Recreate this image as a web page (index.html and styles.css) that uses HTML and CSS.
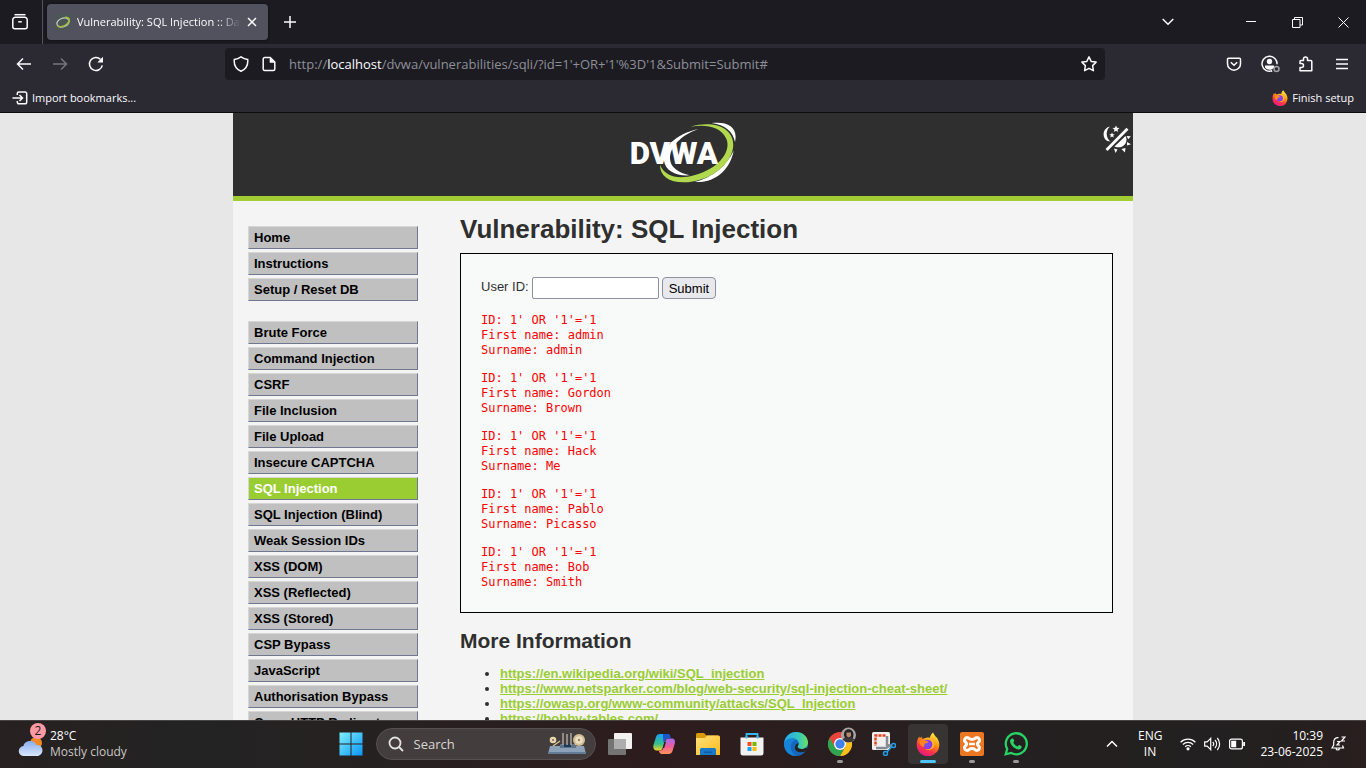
FILE: index.html
```html
<!DOCTYPE html>
<html lang="en">
<head>
<meta charset="utf-8">
<title>Vulnerability: SQL Injection</title>
<link rel="stylesheet" href="styles.css">
</head>
<body>
<svg class="defs" aria-hidden="true">
  <defs>
    <linearGradient id="fx-body" x1="0.8" y1="0" x2="0.3" y2="1"><stop offset="0" stop-color="#fff44f"/><stop offset="0.4" stop-color="#ff980e"/><stop offset="0.7" stop-color="#ff3647"/><stop offset="1" stop-color="#e31587"/></linearGradient>
    <radialGradient id="fx-core"><stop offset="0" stop-color="#6b57ff"/><stop offset="1" stop-color="#9a2ee0"/></radialGradient>
    <linearGradient id="win" x1="0" y1="0" x2="1" y2="1"><stop offset="0" stop-color="#7ff0ff"/><stop offset="1" stop-color="#0a94f5"/></linearGradient>
    <linearGradient id="cloud" x1="0" y1="0" x2="0" y2="1"><stop offset="0" stop-color="#86aef0"/><stop offset="1" stop-color="#dbe7fb"/></linearGradient>
    <linearGradient id="edge-a" x1="0" y1="0" x2="1" y2="0"><stop offset="0" stop-color="#29a9e8"/><stop offset="0.6" stop-color="#35c6c1"/><stop offset="1" stop-color="#6be05c"/></linearGradient>
    <linearGradient id="folder" x1="0" y1="0" x2="1" y2="1"><stop offset="0" stop-color="#ffe17c"/><stop offset="1" stop-color="#f8ba1c"/></linearGradient>
    <linearGradient id="cop-a" x1="0" y1="0" x2="0" y2="1"><stop offset="0" stop-color="#1aa0f5"/><stop offset="0.6" stop-color="#35c08b"/><stop offset="1" stop-color="#f4d52a"/></linearGradient>
    <linearGradient id="cop-b" x1="0" y1="0" x2="0" y2="1"><stop offset="0" stop-color="#a36bf5"/><stop offset="0.5" stop-color="#ee5c9c"/><stop offset="1" stop-color="#ff9655"/></linearGradient>
    <symbol id="firefox" viewBox="0 0 24 24">
      <path fill="url(#fx-body)" d="M17 .5c1 2 2 3 3 4.500 1 .5 1.600 1.500 1.900 2.500.9 1.600 1.400 3.400 1.400 5.300A11.300 11.300 0 0 1 .7 13C.6 9.500 1.700 6.500 3.300 4.500l.5 2 1.500-2 .8 2.200c1.300-.3 2.400-.2 3.500.2 1.400-.6 2.600-.6 4-.1.5-2.500 1.500-4.700 3.400-6.300Z"/>
      <path fill="#ffb52b" d="M8 7c2-2 6-2 8 0 2.200 2 3 5 2 7.500C16.500 18 12 19 9 17c4 0 6-1.500 6-4 0-3-2-5-7-6Z"/>
      <circle cx="11.500" cy="12.500" r="4.800" fill="url(#fx-core)"/>
      <path fill="#ff8a1c" d="M3.500 10c2-1.500 4-2 6-1.500l3 1.200c-.5 1.300-2 1.600-3.300 1.800-1 1-1.200 2.200-.7 3.200C5.500 15 4 13 3.500 10Z"/>
    </symbol>
  </defs>
</svg>

<header class="browser">
  <div class="tabs">
    <button class="view-btn" aria-label="Recent browsing"><svg width="18" height="18" viewBox="0 0 18 18" class="line"><path d="M3.500 1.700h11"/><path d="M4.300 4.300h9.400a2.500 2.500 0 0 1 2.500 2.500v6.900a2 2 0 0 1-2 2H3.800a2 2 0 0 1-2-2V6.800a2.500 2.500 0 0 1 2.500-2.500Z"/><path d="M7.200 8.800h3.600"/></svg></button>
    <div class="tab">
      <svg width="16" height="16" viewBox="0 0 16 16"><rect width="16" height="16" fill="#4d5656"/><ellipse cx="8" cy="8.500" rx="6.300" ry="4.300" fill="none" stroke="#c9cfc4" stroke-width="1.200" transform="rotate(-20 8 8.500)"/><path d="M10 3.300c5-.3 5.500 4 2 6.700-3 2.500-7 3.500-9 2" fill="none" stroke="#a2b944" stroke-width="1.600"/></svg>
      <span class="tab-title">Vulnerability: SQL Injection :: Da</span>
      <button aria-label="Close tab"><svg width="10" height="10" viewBox="0 0 10 10" class="line"><path d="m1 1 8 8M9 1 1 9"/></svg></button>
    </div>
    <button class="new-tab" aria-label="New tab"><svg width="12" height="12" viewBox="0 0 12 12" class="line"><path d="M6 0v12M0 6h12"/></svg></button>
    <div class="window-controls">
      <button class="all-tabs" aria-label="List all tabs"><svg width="12" height="8" viewBox="0 0 12 8" class="line"><path d="m.7 1 5.300 5.300L11.300 1"/></svg></button>
      <button aria-label="Minimize"><svg width="10" height="10" viewBox="0 0 10 10" class="thin"><path d="M0 4.500h10"/></svg></button>
      <button aria-label="Restore"><svg width="11" height="11" viewBox="0 0 11 11" class="thin"><path d="M.5 2.500h7.500v8H.5zM2.500 2.500v-2h8v7.500H8"/></svg></button>
      <button aria-label="Close"><svg width="11" height="11" viewBox="0 0 11 11" class="thin"><path d="m.5.5 10 10M10.500.5l-10 10"/></svg></button>
    </div>
  </div>

  <div class="toolbar">
    <nav class="nav-left" aria-label="Navigation">
      <button aria-label="Back"><svg width="16" height="16" viewBox="0 0 16 16" class="line"><path d="M15 8H1.500M7 2.500 1.500 8 7 13.500"/></svg></button>
      <button aria-label="Forward" disabled><svg width="16" height="16" viewBox="0 0 16 16" class="line"><path d="M1 8h13.500M9 2.500 14.500 8 9 13.500"/></svg></button>
      <button aria-label="Reload"><svg width="16" height="16" viewBox="0 0 16 16" class="line"><path d="M14.300 9.300A6.500 6.500 0 1 1 12.600 3.400"/><path fill="currentColor" stroke="none" d="M15 .8v5.700H9.300Z"/></svg></button>
    </nav>
    <div class="url-bar">
      <svg width="16" height="16" viewBox="0 0 16 16" class="line"><path d="M8 .8c2.200 1.500 4.300 2.300 6.700 2.700.5 4.800-1.200 9.300-6.700 11.800C2.500 12.800.8 8.300 1.300 3.500 3.700 3.100 5.800 2.300 8 .8Z"/></svg>
      <svg width="16" height="16" viewBox="0 0 16 16" class="line"><path d="M3.700 1.500h5.500l4.600 4.600v6.900a1.500 1.500 0 0 1-1.500 1.500H3.700A1.500 1.500 0 0 1 2.200 13V3a1.500 1.500 0 0 1 1.500-1.500Z"/><path fill="currentColor" stroke="none" d="M8.700 1.500v5.200h5.100Z"/></svg>
      <span class="url">http://<b>localhost</b>/dvwa/vulnerabilities/sqli/?id=1'+OR+'1'%3D'1&amp;Submit=Submit#</span>
      <button aria-label="Bookmark this page"><svg width="16" height="16" viewBox="0 0 16 16" class="line"><path stroke-linejoin="round" d="m8 .9 2.200 4.500 4.900.7-3.500 3.500.8 5.100L8 12.300l-4.400 2.400.8-5.100L.9 6.100l4.900-.7Z"/></svg></button>
    </div>
    <div class="nav-right">
      <button aria-label="Save to Pocket"><svg width="16" height="16" viewBox="0 0 16 16" class="line"><path d="M2.500 2.200h11a1 1 0 0 1 1 1v4.500a6.500 6.500 0 0 1-13 0V3.200a1 1 0 0 1 1-1Z"/><path d="M4.800 6.300 8 9.300l3.200-3"/></svg></button>
      <button aria-label="Account"><svg width="20" height="18" viewBox="0 0 20 18" class="line"><path d="M12.200 15.700a7.500 7.500 0 1 1 4.800-6.400"/><circle cx="9.500" cy="6.500" r="2.700" fill="currentColor" stroke="none"/><path fill="currentColor" stroke="none" d="M5 10.500h9v2a5.500 5.500 0 0 1-9 0Z"/><circle cx="16.500" cy="14" r="2.500" stroke="#a3a2a8"/></svg></button>
      <button aria-label="Extensions"><svg width="16" height="16" viewBox="0 0 16 16" class="line"><path stroke-linejoin="round" d="M5.500 4.500V3a2 2 0 0 1 4 0v1.500h3.300a1 1 0 0 1 1 1v9.200H2v-3.200h1.500a2 2 0 0 0 0-4H2v-2a1 1 0 0 1 1-1Z"/></svg></button>
      <button aria-label="Menu"><svg width="12" height="12" viewBox="0 0 12 12" class="line"><path d="M0 1.500h12M0 6h12M0 10.500h12"/></svg></button>
    </div>
  </div>

  <div class="bookmarks">
    <button><svg width="16" height="14" viewBox="0 0 16 14" class="line"><path d="M5.300 4V2.500a1.500 1.500 0 0 1 1.500-1.500h6.400a1.500 1.500 0 0 1 1.500 1.500v8.800a1.500 1.500 0 0 1-1.500 1.500H6.800a1.500 1.500 0 0 1-1.500-1.500V10M.5 7h9.500M7.500 4l3 3-3 3"/></svg>Import bookmarks...</button>
    <button><svg width="16" height="16"><use href="#firefox"/></svg>Finish setup</button>
  </div>
</header>

<div class="viewport">
  <div class="site">
    <div class="site-header">
      <svg class="logo" width="108" height="64" viewBox="90 34 324 192" role="img" aria-label="DVWA">
        <path fill="#fff" d="M298 58C232 72 190 112 195 153c4 30 36 47 78 44-34-7-60-24-60-51 0-35 34-70 85-88Z"/>
        <path fill="#fff" d="M338 40c48-6 80 12 70 57-6-32-30-51-70-57ZM404 123c-10 54-53 98-117 94 55-15 94-47 117-94Z"/>
        <path fill="#b0d94e" d="M275 51c72-21 135 5 127 64-7 51-73 103-148 103-45 0-71-20-71-53 14 35 54 46 105 31 35-10 60-25 75-42C382 134 392 108 381 86 366 54 326 43 275 51Z"/>
        <text x="92" y="163" class="logo-text">DVWA</text>
      </svg>
      <button class="theme" aria-label="Toggle theme"><svg width="28" height="28" viewBox="0 0 28 28"><path fill="#fff" d="M7 1.500C-.5 3-1.500 13 4.500 16l3 .5C2.500 13 2.500 5 7 1.500ZM13 .5l1 2.300 2.500.2-2 1.700.7 2.300-2.200-1.200-2.200 1.200.7-2.300-2-1.700 2.500-.2ZM9 7.500l.8 1.700 1.900.1-1.500 1.300.5 1.900L9 11.500l-1.700 1 .5-1.900-1.500-1.300 1.900-.1ZM11.500 21.500 22.500 11c3.500 6-2.500 14-11 10.500ZM23.500 11l4.300.3-2.500 3ZM24 17l4 2.200-4 1.300ZM18.500 24l4-1-.6 4.500ZM11 23.500l3.500 1-2 3.500Z"/><path d="M3.500 25 24.500 3.800" stroke="#fff" stroke-width="2.800"/></svg></button>
    </div>
    <div class="site-body">
      <nav class="menu" aria-label="Main menu">
        <ul>
          <li><a href="#">Home</a></li>
          <li><a href="#">Instructions</a></li>
          <li><a href="#">Setup / Reset DB</a></li>
        </ul>
        <ul>
          <li><a href="#">Brute Force</a></li>
          <li><a href="#">Command Injection</a></li>
          <li><a href="#">CSRF</a></li>
          <li><a href="#">File Inclusion</a></li>
          <li><a href="#">File Upload</a></li>
          <li><a href="#">Insecure CAPTCHA</a></li>
          <li><a href="#" class="selected">SQL Injection</a></li>
          <li><a href="#">SQL Injection (Blind)</a></li>
          <li><a href="#">Weak Session IDs</a></li>
          <li><a href="#">XSS (DOM)</a></li>
          <li><a href="#">XSS (Reflected)</a></li>
          <li><a href="#">XSS (Stored)</a></li>
          <li><a href="#">CSP Bypass</a></li>
          <li><a href="#">JavaScript</a></li>
          <li><a href="#">Authorisation Bypass</a></li>
          <li><a href="#">Open HTTP Redirect</a></li>
        </ul>
      </nav>
      <main class="main">
        <h1>Vulnerability: SQL Injection</h1>
        <section class="panel">
          <form>
            <label for="uid">User ID:</label>
            <input type="text" id="uid" name="id">
            <button type="submit">Submit</button>
          </form>
<pre>ID: 1' OR '1'='1
First name: admin
Surname: admin</pre>
<pre>ID: 1' OR '1'='1
First name: Gordon
Surname: Brown</pre>
<pre>ID: 1' OR '1'='1
First name: Hack
Surname: Me</pre>
<pre>ID: 1' OR '1'='1
First name: Pablo
Surname: Picasso</pre>
<pre>ID: 1' OR '1'='1
First name: Bob
Surname: Smith</pre>
        </section>
        <h2>More Information</h2>
        <ul class="links">
          <li><a href="#">https://en.wikipedia.org/wiki/SQL_injection</a></li>
          <li><a href="#">https://www.netsparker.com/blog/web-security/sql-injection-cheat-sheet/</a></li>
          <li><a href="#">https://owasp.org/www-community/attacks/SQL_Injection</a></li>
          <li><a href="#">https://bobby-tables.com/</a></li>
        </ul>
      </main>
    </div>
  </div>
</div>

<footer class="taskbar">
  <div class="weather">
    <div class="weather-icon">
      <svg width="26" height="24" viewBox="0 0 26 24"><circle cx="18" cy="10" r="6" fill="#f08a24"/><path fill="url(#cloud)" d="M6 23a5 5 0 0 1-.5-10C6 9.500 9 8 12 8s5.500 1.500 6.300 4c3.500-.3 6.200 2 6.200 5.200S22 23 19 23Z"/></svg>
      <span class="badge">2</span>
    </div>
    <div><div>28°C</div><div class="dim">Mostly cloudy</div></div>
  </div>
  <div class="apps">
    <button class="app" aria-label="Start"><svg width="24" height="24" viewBox="0 0 24 24"><path fill="url(#win)" d="M.5.5h11v11H.5zM12.500.5h11v11h-11zM.5 12.500h11v11H.5zM12.500 12.500h11v11h-11z"/></svg></button>
    <button class="search"><svg width="16" height="16" viewBox="0 0 16 16" fill="none" stroke="#e4e2e2" stroke-width="1.800"><circle cx="7" cy="7" r="5.500"/><path d="m11 11 4 4"/></svg><span>Search</span>
      <svg width="40" height="24" viewBox="0 0 40 24"><path fill="#8da1b8" d="M3 14h34l2 8H1z"/><path fill="#637b96" d="M1 20h38v2H1z"/><path fill="#5f7388" d="M13 12h16v4H13z"/><path fill="#1d3b55" d="M17 12h7v3h-7z"/><path stroke="#aaa59e" stroke-width="1.500" d="M16 1v12M20 2v11M24 1v12"/><path stroke="#d5bc8b" stroke-width="1.500" d="M6 14 13 9"/><circle cx="6" cy="8" r="3.300" fill="#e7d5ad"/><circle cx="32" cy="8" r="6" fill="#d3bd93"/><circle cx="32" cy="8" r="3.800" fill="#ece0c4"/><circle cx="32" cy="8" r="1.200" fill="#9a8465"/><circle cx="6" cy="8" r="1" fill="#80694d"/></svg>
    </button>
    <button class="app" aria-label="Task view"><svg width="24" height="24" viewBox="0 0 24 24"><rect x="6" y="1" width="18" height="16" rx="1" fill="#f1f1f1"/><rect x="0" y="7" width="18" height="16" rx="1" fill="#747474"/><path d="M6 7h12v10H6z" fill="#adadad"/></svg></button>
    <button class="app" aria-label="Copilot"><svg width="24" height="24" viewBox="0 0 24 24"><path fill="url(#cop-a)" d="M8 2h7.500c2 0 2.500 1.500 3 4H16c-2 0-2.700 1-3.200 3l-2 6.500c-.6 2-1.600 3-3.300 3H5C2 18.500.8 16 1.500 13L4 5c.6-2 2-3 4-3Z"/><path fill="#1857cc" d="M11 2h4.500c2 0 2.500 1.500 3 4H16c-2 0-2.700 1-3.200 3L12 11c-1-2-1-6-1-9Z"/><path fill="url(#cop-b)" d="M18.500 6.500H20c2.500 0 3.500 2.500 2.800 5L20.500 19c-.7 2-2 3-4 3H10c-2 0-2.700-1.500-3.200-3.500h1.500c2 0 2.700-1 3.200-3l2-6.500c.6-2 1.600-2.500 3.300-2.500Z"/><path fill="#292122" d="m12.500 10-1.800 6h1.500L14 10Z"/></svg></button>
    <button class="app" aria-label="File Explorer"><svg width="24" height="24" viewBox="0 0 24 24"><path fill="#d99a0c" d="M0 2.500A1.500 1.500 0 0 1 1.500 1H8l2.500 2.500H22V9H0z"/><path fill="url(#folder)" d="M0 6h9l2-2.500h11.500A1.500 1.500 0 0 1 24 5v18H0z"/><path fill="#1879c9" d="M4 23v-5.500A1.500 1.500 0 0 1 5.500 16h13a1.500 1.500 0 0 1 1.500 1.500V23z"/><path fill="#0d5eaa" d="M8 19.500h8V21H8z"/></svg></button>
    <button class="app" aria-label="Microsoft Store"><svg width="24" height="24" viewBox="0 0 24 24"><path fill="none" stroke="#35b7f1" stroke-width="1.800" d="M6.500 7V2h11v5"/><path fill="#f2f2f2" d="M.5 5.500h23V21a2.500 2.500 0 0 1-2.500 2.500H3A2.500 2.500 0 0 1 .5 21z"/><path fill="#f04e23" d="M7.500 10h4v4h-4z"/><path fill="#7cb500" d="M12.500 10h4v4h-4z"/><path fill="#1aa4ed" d="M7.500 15h4v4h-4z"/><path fill="#fdb80a" d="M12.500 15h4v4h-4z"/><path stroke="#35b7f1" stroke-width="1.800" d="M6.500 4v2.500M17.500 4v2.500"/></svg></button>
    <button class="app" aria-label="Edge"><svg width="24" height="24" viewBox="0 0 24 24"><circle cx="12" cy="12" r="12" fill="#1568bd"/><path fill="url(#edge-a)" d="M0 11C1 4.500 6 0 12 0c7 0 12 5 12 10.500 0 4-3 6.500-6.500 6.500-2.500 0-4-1-4-2.200 0-1 1.200-1.500 1.200-3.500 0-2.500-2.500-4.800-6-4.800C5 6.500 1.500 8.500 0 11Z"/><path fill="#1684d8" d="M0 12c.5-3.500 4-5.500 8.500-5.500 1.500 0 3 .5 4 1.300C8 9 6 12.500 7 17c.7 3 2.500 5.500 5 7C5 24 0 18.500 0 12Z"/><path fill="#26201f" d="M13.500 14.800c0 1.200 1.500 2.200 4 2.200 1.800 0 3.200-.5 4.300-1.300L24 17c-1.500 2-4 3.300-7 3.300-4.500 0-7-3-5.800-6.300.6-1.500 1.800-2.500 3.300-3 .3 1.700-1 2.800-1 3.800Z"/></svg></button>
    <button class="app running" aria-label="Chrome"><svg width="32" height="34" viewBox="0 0 32 34"><circle cx="16" cy="17" r="12" fill="#e9453a"/><path fill="#fbc116" d="M16 11h10.400A12 12 0 0 1 16 29l5.200-9Z"/><path fill="#2ca74f" d="M5.600 11A12 12 0 0 0 16 29l5.200-9a6 6 0 0 1-10.400 0Z"/><circle cx="16" cy="17" r="6" fill="#fff"/><circle cx="16" cy="17" r="4.700" fill="#3f82ee"/><circle cx="24.500" cy="8" r="7.500" fill="#aaa5a2"/><path fill="#262224" d="M20 8.500c-1-8 9-8.500 9.500-1L29 11h-8Z"/><path fill="#b4876e" d="M22.500 5.500h4.500V9l-2.300 1.800L22.500 9z"/><path fill="#3a3639" d="M18.500 12.500c2-2 4-2.500 6-2 2-.5 4 0 5.800 2a7.500 7.500 0 0 1-11.800 0Z"/></svg></button>
    <button class="app" aria-label="Snipping Tool"><svg width="24" height="24" viewBox="0 0 24 24"><rect width="18" height="18" rx="1.500" fill="#f0f0f0"/><path fill="none" stroke="#df421f" stroke-width="2.500" stroke-dasharray="3 1" d="M13.500 3.500h-10V14"/><path fill="none" stroke="#858b92" stroke-width="2.500" d="M15 4v9l5 1M4 16h10l3-2"/><circle cx="21.500" cy="13.500" r="2" fill="none" stroke="#21a0e5" stroke-width="1.500"/><circle cx="13.500" cy="21.500" r="2" fill="none" stroke="#21a0e5" stroke-width="1.500"/><path stroke="#21a0e5" stroke-width="1.500" d="m15 20 4.500-5"/></svg></button>
    <button class="app running active" aria-label="Firefox"><svg width="24" height="24"><use href="#firefox"/></svg></button>
    <button class="app running" aria-label="XAMPP"><svg width="24" height="24" viewBox="0 0 24 24"><rect width="24" height="24" rx="2" fill="#ed7622"/><path fill="none" stroke="#fff" stroke-width="3" stroke-linejoin="round" d="M7 5.500c2 0 2 2 5 2s3-2 5-2 3.500 3 1.500 4.700c-1.500 1.300-1.500 2.300 0 3.600C20.500 15.500 19 18.500 17 18.500s-2-2-5-2-3 2-5 2-3.500-3-1.500-4.700c1.500-1.300 1.500-2.300 0-3.600C3.500 8.500 5 5.500 7 5.500Z"/><path stroke="#fff" stroke-width="2.500" d="M9 12h6"/></svg></button>
    <button class="app running" aria-label="WhatsApp"><svg width="24" height="24" viewBox="0 0 24 24"><path fill="none" stroke="#28d366" stroke-width="2.300" d="M1.700 22.300 3.200 17A10.500 10.500 0 1 1 7.300 21Z"/><path fill="#28d366" d="m8 6.500 1.200.1c.5.7.9 1.700 1.100 2.500-.3.700-.8 1-1 1.500 1 1.900 2.300 3.100 4.200 4l1.500-1.500c1 .3 1.800.7 2.700 1.300.2 1.800-1.500 3.200-3.300 3C10 16.600 7 13.500 6 9.500 5.900 8.300 6.700 7 8 6.500Z"/></svg></button>
  </div>
  <div class="tray">
    <button aria-label="Show hidden icons"><svg width="12" height="8" viewBox="0 0 12 8" class="line"><path d="m1 6.500 5-5 5 5"/></svg></button>
    <div class="lang">ENG<br>IN</div>
    <div class="status">
      <svg width="16" height="14" viewBox="0 0 16 14" class="wire"><path d="M.6 5.200a10.500 10.500 0 0 1 14.800 0M2.900 7.500a7.200 7.200 0 0 1 10.200 0M5.200 9.800a4 4 0 0 1 5.600 0"/><circle cx="8" cy="11.800" r="1.600" fill="#fff" stroke="none"/></svg>
      <svg width="17" height="14" viewBox="0 0 17 14" class="wire"><path d="M.7 4.800h2.500l3.500-3.500v11.400L3.200 9.200H.7zM8.800 5a3 3 0 0 1 0 4M11 3a6 6 0 0 1 0 8M13.300 1a9 9 0 0 1 0 12"/></svg>
      <svg width="16" height="12" viewBox="0 0 16 12" class="wire"><rect x=".6" y="1.100" width="12.800" height="9.800" rx="2"/><path fill="#fff" stroke="none" d="M2.200 2.800h5v6.400h-5zM14.200 4H16v4h-1.800z"/></svg>
    </div>
    <div class="clock">10:39<br>23-06-2025</div>
    <svg width="15" height="16" viewBox="0 0 15 16" class="wire"><path d="M7.500 1.600C4.500 1.200 2.700 3.500 2.700 6v3L1 12h11.500l-1-2.500M5 12.500c.5 2 3 2 3.500 0M6 5.500h3L6 9h3M10.500 1H14l-3.500 4H14"/></svg>
  </div>
</footer>
</body>
</html>
```
FILE: styles.css
```css
* { box-sizing: border-box; }
body {
  margin: 0;
  height: 100vh;
  display: flex;
  flex-direction: column;
  overflow: hidden;
  font: 12px/16px "Open Sans", "Noto Sans", sans-serif;
}
button {
  border: 0;
  padding: 0;
  background: none;
  color: inherit;
  font: inherit;
}
svg { display: block; flex: none; }
ul { margin: 0; padding: 0; list-style: none; }
.defs { position: absolute; width: 0; height: 0; }
.line { fill: none; stroke: currentColor; stroke-width: 1.5; }
.thin { fill: none; stroke: currentColor; stroke-width: 1; }
.wire { fill: none; stroke: #fff; stroke-width: 1.2; }

/* browser window */
.browser {
  flex: none;
  background: #2b2a33;
  color: #fbfbfe;
  border-bottom: 1px solid #0c0c0d;
  font-size: 11px;
}
.tabs {
  display: flex;
  align-items: center;
  height: 44px;
  background: #1c1b22;
}
.view-btn {
  width: 43px;
  height: 44px;
  padding-left: 11px;
  border-right: 1px solid #54535b;
}
.tab {
  display: flex;
  align-items: center;
  gap: 6px;
  width: 221px;
  height: 36px;
  margin-left: 4px;
  padding: 0 11px 0 8px;
  border-radius: 4px;
  background: #52525e;
  box-shadow: 0 0 3px #0c0c0d;
}
.tab-title {
  flex: 1;
  overflow: hidden;
  white-space: nowrap;
  -webkit-mask-image: linear-gradient(to left, transparent, #000 24px);
  mask-image: linear-gradient(to left, transparent, #000 24px);
}
.new-tab { margin-left: 16px; }
.window-controls { display: flex; margin-left: auto; }
.window-controls button {
  display: grid;
  place-items: center;
  width: 46px;
  height: 44px;
}
.window-controls .all-tabs { margin-right: 37px; }
.toolbar {
  display: grid;
  grid-template-columns: 225px 1fr 261px;
  align-items: center;
  height: 40px;
}
.nav-left, .nav-right { display: flex; }
.nav-left { padding-left: 6px; }
.nav-right { justify-content: flex-end; padding-right: 6px; }
.nav-left button, .nav-right button {
  display: grid;
  place-items: center;
  width: 36px;
  height: 32px;
}
.nav-left button:disabled { color: #76757c; }
.url-bar {
  display: flex;
  align-items: center;
  gap: 12px;
  height: 32px;
  padding: 0 8px;
  border-radius: 4px;
  background: #1c1b22;
}
.url {
  flex: 1;
  font-size: 13px;
  color: #8f8f98;
  white-space: nowrap;
}
.url b { font-weight: 400; color: #fbfbfe; }
.bookmarks {
  display: flex;
  justify-content: space-between;
  height: 28px;
  padding: 0 12px;
}
.bookmarks button { display: flex; align-items: center; gap: 4px; }

/* page */
.viewport {
  flex: 1;
  min-height: 0;
  overflow: hidden;
  background: #e7e7e7;
  color: #2f2f2f;
  font: 13px/15px "Liberation Sans", Arial, sans-serif;
}
.site { max-width: 900px; min-height: 100%; margin: 0 auto; background: #f4f4f4; }
.site-header {
  display: grid;
  grid-template-columns: 1fr auto 1fr;
  align-items: start;
  height: 88px;
  padding-top: 8px;
  background: #2f2f2f;
  border-bottom: 5px solid #a1cc33;
}
.logo { grid-column: 2; }
.logo-text { font: 900 94px Roboto, sans-serif; fill: #fff; }
.theme { justify-self: end; margin: 4px 2px 0 0; }
.site-body { display: flex; gap: 42px; padding: 0 20px 0 15px; }
.menu {
  flex: none;
  display: grid;
  align-content: start;
  gap: 20px;
  width: 170px;
  padding-top: 25px;
}
.menu ul { display: grid; gap: 3px; }
.menu a {
  display: block;
  height: 23px;
  padding: 3px 5px;
  border: 1px solid;
  border-color: #d6d6d6 #6f7890 #6f7890 #d6d6d6;
  background: #c0c0c0;
  color: #000;
  font-weight: bold;
  text-decoration: none;
}
.menu .selected { background: #9acd32; color: #fff; }
.main { flex: 1; }
h1 { margin: 14px 0 10px; font-size: 26px; line-height: 28px; }
h2 { margin: 16px 0 13px; font-size: 21px; line-height: 24px; }
.panel {
  padding: 23px 20px 22px;
  border: 1px solid #000;
  background: #f8fafa;
}
.panel form { display: flex; align-items: center; gap: 3px; margin-bottom: 14px; }
.panel label { line-height: 16px; padding-bottom: 2px; }
.panel input {
  width: 127px;
  height: 22px;
  border: 1px solid #8f8f9d;
  border-radius: 2px;
  background: #fff;
}
.panel form button {
  height: 22px;
  padding: 0 6px;
  border: 1px solid #8f8f9d;
  border-radius: 4px;
  background: #e9e9ed;
  color: #000;
}
pre {
  margin: 0 0 13px;
  color: #f00;
  font: 12px/15px "DejaVu Sans Mono", monospace;
}
pre:last-child { margin-bottom: 0; }
.links { padding-left: 40px; list-style: disc; }
.links a { color: #9acd32; font-weight: bold; }

/* taskbar */
.taskbar {
  flex: none;
  display: grid;
  grid-template-columns: 1fr auto 1fr;
  align-items: center;
  height: 48px;
  padding-bottom: 2px;
  border-top: 1px solid #474342;
  background: linear-gradient(90deg, #272120, #232323 14%, #272121 30%, #2d1c1d 47%, #2c1d1e 55%, #252021 70%, #222020 90%, #281f1e);
  color: #fff;
}
.weather { display: flex; align-items: center; gap: 6px; padding-left: 18px; }
.weather-icon { position: relative; padding-top: 2px; }
.badge {
  position: absolute;
  top: -8px;
  left: 12px;
  width: 16px;
  height: 16px;
  border-radius: 8px;
  background: #ff99a4;
  color: #1a1a1a;
  text-align: center;
}
.dim { color: #c9c6c5; }
.apps { display: flex; align-items: center; }
.app {
  position: relative;
  display: grid;
  place-items: center;
  width: 44px;
  height: 44px;
}
.app.active { width: 40px; margin: 0 2px; height: 40px; border-radius: 4px; background: #383434; }
.running::after {
  content: "";
  position: absolute;
  bottom: 3px;
  left: 50%;
  width: 6px;
  height: 3px;
  margin-left: -3px;
  border-radius: 2px;
  background: #9b9898;
}
.active::after { bottom: 1px; width: 16px; margin-left: -8px; background: #4cc2ff; }
.search {
  display: flex;
  align-items: center;
  gap: 10px;
  width: 220px;
  height: 32px;
  margin: 0 2px 0 3px;
  padding: 0 8px 0 11px;
  border: 1px solid #565050;
  border-radius: 16px;
  background: #433d3d;
  color: #d9d6d6;
}
.search span { flex: 1; text-align: left; font-size: 13px; }
.tray {
  display: flex;
  align-items: center;
  justify-content: flex-end;
  padding-right: 20px;
}
.lang { width: 24px; margin-left: 20px; text-align: center; white-space: nowrap; }
.status { display: flex; align-items: center; gap: 8px; margin-left: 18px; }
.clock { width: 78px; text-align: right; }
.tray > svg { margin-left: 8px; }
```
